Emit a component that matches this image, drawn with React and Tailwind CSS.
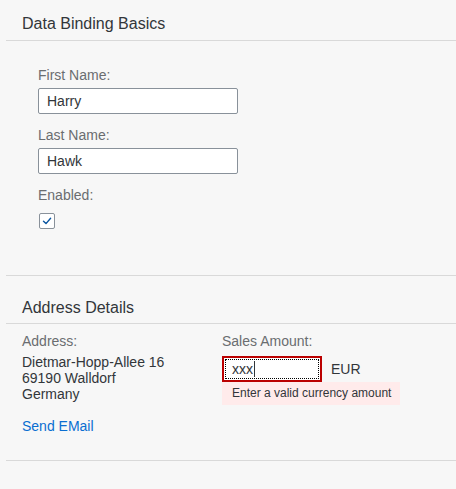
export default function App() {
  return (
    <div className="min-h-[489px] bg-[#f7f7f7] font-['Liberation_Sans',Arial,sans-serif] text-[#32363a]">
      {/* Data Binding Basics */}
      <section className="ml-[6px] border-b border-[#d9d9d9] pb-[46px]">
        <div className="border-b border-[#d9d9d9] pl-[16px] pt-[14px] pb-[6px] text-[16px] leading-[20px]">
          Data Binding Basics
        </div>
        <div className="flex flex-col gap-[12px] pl-[32px] pt-[25px]">
          <div className="flex flex-col">
            <label className="mb-[4px] text-[14px] leading-[18px] text-[#6a6d70]">First Name:</label>
            <div className="flex h-[26px] w-[200px] items-center rounded-[2px] border border-[#89919a] bg-white px-[8px] text-[14px]">
              Harry
            </div>
          </div>
          <div className="flex flex-col">
            <label className="mb-[4px] text-[14px] leading-[18px] text-[#6a6d70]">Last Name:</label>
            <div className="flex h-[26px] w-[200px] items-center rounded-[2px] border border-[#89919a] bg-white px-[8px] text-[14px]">
              Hawk
            </div>
          </div>
          <div className="flex flex-col">
            <label className="mb-[9px] text-[14px] leading-[18px] text-[#6a6d70]">Enabled:</label>
            <div className="ml-[1px] flex h-[16px] w-[16px] items-center justify-center rounded-[2px] border border-[#89919a] bg-white">
              <svg width="10" height="10" viewBox="0 0 10 10" fill="none">
                <path d="M1.5 5.2 L4 7.6 L8.6 2.2" stroke="#0854a0" strokeWidth="1.4" strokeLinecap="round" strokeLinejoin="round" />
              </svg>
            </div>
          </div>
        </div>
      </section>

      {/* Address Details */}
      <section className="ml-[6px] border-b border-[#d9d9d9] pb-[25px]">
        <div className="border-b border-[#d9d9d9] pl-[16px] pt-[22px] pb-[5px] text-[16px] leading-[20px]">
          Address Details
        </div>
        <div className="grid grid-cols-[200px_1fr] pl-[16px] pt-[8px] text-[14px]">
          <div className="flex flex-col">
            <span className="mb-[4px] leading-[18px] text-[#6a6d70]">Address:</span>
            <span className="leading-[16px]">Dietmar-Hopp-Allee 16</span>
            <span className="leading-[16px]">69190 Walldorf</span>
            <span className="leading-[16px]">Germany</span>
            <a href="#" className="mt-[15px] leading-[18px] text-[#0a6ed1]">Send EMail</a>
          </div>
          <div className="flex flex-col">
            <span className="mb-[6px] leading-[18px] text-[#6a6d70]">Sales Amount:</span>
            <div className="flex items-center">
              <div className="flex h-[26px] w-[100px] items-center border-2 border-[#bb0000] bg-white pl-[8px] outline-1 outline-dotted outline-black outline-offset-[-4px]">
                <span className="leading-[18px]">xxx</span>
                <span className="ml-[1px] h-[16px] w-[1px] bg-[#32363a]"></span>
              </div>
              <span className="ml-[9px]">EUR</span>
            </div>
            <div className="w-[178px] whitespace-nowrap bg-[#ffebeb] px-[10px] py-[4px] text-[12px] leading-[15px]">
              Enter a valid currency amount
            </div>
          </div>
        </div>
      </section>
    </div>
  );
}
